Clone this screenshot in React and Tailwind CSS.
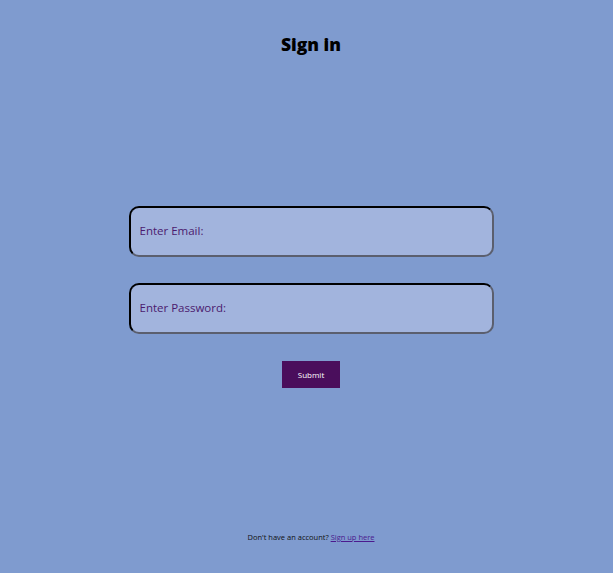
import React, { useState } from 'react';

const App = () => {
    const [email, setEmail] = useState('');
    const [password, setPassword] = useState('');

    return (
        <div
            className="min-h-[573px] w-full bg-[#7f9bcf] flex flex-col items-center pt-[32px] pl-[9px]"
            style={{ fontFamily: '"Open Sans", Inter, sans-serif' }}
        >
            <h1 className="text-[17.5px] leading-[24px] font-extrabold text-black">Sign in</h1>

            <form
                className="flex flex-col items-center w-full mt-[150px]"
                onSubmit={(e) => e.preventDefault()}
            >
                <input
                    type="email"
                    value={email}
                    onChange={(e) => setEmail(e.target.value)}
                    placeholder="Enter Email:"
                    className="w-[365px] h-[51px] rounded-[10px] border-2 border-t-black border-l-black border-r-[#5b5f6e] border-b-[#5b5f6e] bg-[#a2b4dd] pl-[9px] pr-[9px] pb-[2px] text-[11.5px] text-[#4b1a6e] placeholder-[#4b1a6e] outline-none"
                />
                <input
                    type="password"
                    value={password}
                    onChange={(e) => setPassword(e.target.value)}
                    placeholder="Enter Password:"
                    className="mt-[26px] w-[365px] h-[51px] rounded-[10px] border-2 border-t-black border-l-black border-r-[#5b5f6e] border-b-[#5b5f6e] bg-[#a2b4dd] pl-[9px] pr-[9px] pb-[2px] text-[11.5px] text-[#4b1a6e] placeholder-[#4b1a6e] outline-none"
                />
                <button
                    type="submit"
                    className="mt-[27px] w-[58px] h-[27px] bg-[#4a0e5c] text-white text-[8px] font-medium"
                >
                    Submit
                </button>
            </form>

            <p className="mt-[141px] text-[7.5px] leading-[16px] text-[#111]">
                Don't have an account?{' '}
                <a href="#" className="text-[#4b1a8e] underline">Sign up here</a>
            </p>
        </div>
    );
};

export default App;
